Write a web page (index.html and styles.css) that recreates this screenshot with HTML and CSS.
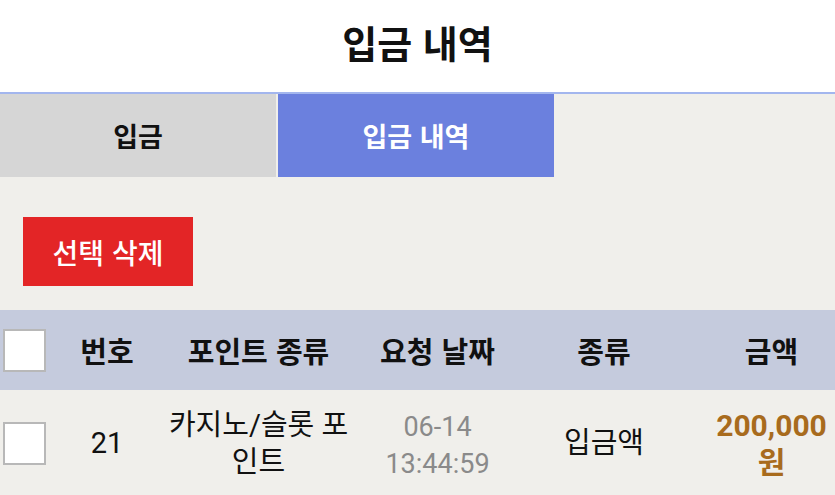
FILE: index.html
```html
<!DOCTYPE html>
<html lang="ko">
<head>
  <meta charset="UTF-8">
  <meta name="viewport" content="width=device-width, initial-scale=1.0">
  <title>입금 내역</title>
  <link rel="stylesheet" href="styles.css">
</head>
<body>
  <!-- Page Title -->
  <div class="page-header">입금 내역</div>

  <!-- Tabs -->
  <div class="tabs">
    <a href="#" class="tab">입금</a>
    <a href="#" class="tab active">입금 내역</a>
  </div>

  <!-- Main Content -->
  <div class="content">
    <div class="actions">
      <button class="delete-btn">선택 삭제</button>
    </div>

    <table class="history">
      <colgroup>
        <col class="col-check">
        <col class="col-no">
        <col class="col-point">
        <col class="col-date">
        <col class="col-type">
        <col class="col-amount">
      </colgroup>
      <thead>
        <tr>
          <th><input type="checkbox" class="check"></th>
          <th>번호</th>
          <th>포인트 종류</th>
          <th>요청 날짜</th>
          <th>종류</th>
          <th class="amount-head">금액</th>
        </tr>
      </thead>
      <tbody>
        <tr>
          <td><input type="checkbox" class="check"></td>
          <td>21</td>
          <td class="point">카지노/슬롯 포인트</td>
          <td class="date">06-14<br>13:44:59</td>
          <td>입금액</td>
          <td class="amount">200,000 원</td>
        </tr>
      </tbody>
    </table>
  </div>
</body>
</html>
```

FILE: styles.css
```css
/* Global Styles */
body {
  font-family: Roboto, "Noto Sans CJK KR", sans-serif;
  margin: 0;
  padding: 0;
  background-color: #f0efeb;
  color: #111;
}

/* Title */
.page-header {
  background-color: #ffffff;
  height: 92px;
  line-height: 84px;
  text-align: center;
  font-family: "Noto Sans CJK KR", sans-serif;
  font-size: 38px;
  font-weight: bold;
  border-bottom: 2px solid #a3b6ee;
}

/* Tabs */
.tabs {
  display: flex;
  height: 83px;
}

.tab {
  width: 276px;
  display: flex;
  justify-content: center;
  align-items: center;
  text-decoration: none;
  color: #111;
  background-color: #d6d6d6;
  font-family: "Noto Sans CJK KR", sans-serif;
  font-size: 27px;
  font-weight: bold;
}

.tab.active {
  margin-left: 2px;
  background-color: #6b80de;
  color: #ffffff;
}

/* Delete Button */
.actions {
  padding: 40px 23px 24px;
}

.delete-btn {
  width: 170px;
  height: 69px;
  border: none;
  background-color: #e32526;
  color: #ffffff;
  font-family: "Noto Sans CJK KR", sans-serif;
  font-size: 28px;
  font-weight: 500;
  cursor: pointer;
}

/* Table */
.history {
  width: 100%;
  table-layout: fixed;
  border-collapse: collapse;
}

.col-check { width: 52px; }
.col-no { width: 110px; }
.col-point { width: 193px; }
.col-date { width: 165px; }
.col-type { width: 168px; }
.col-amount { width: 147px; }

.history th,
.history td {
  padding: 0 6px;
  text-align: center;
}

.history th:first-child,
.history td:first-child {
  padding: 0 0 0 3px;
  text-align: left;
}

.history th {
  height: 80px;
  background-color: #c5cbdd;
  font-family: "Noto Sans CJK KR", sans-serif;
  font-size: 29px;
  font-weight: bold;
}

.history td {
  height: 103px;
  font-size: 29px;
  line-height: 37px;
}

.check {
  appearance: none;
  display: block;
  margin: 0;
  width: 43px;
  height: 43px;
  background-color: #ffffff;
  border: 2px solid #b8b8b8;
  box-sizing: border-box;
}

.history td.point {
  padding: 0 4px;
}

.history td.date {
  color: #8a8a8a;
  font-size: 27px;
  padding-top: 4px;
}

.history th.amount-head,
.history td.amount {
  padding: 0 0 0 20px;
}

.history td.amount {
  color: #a86b1d;
  font-weight: bold;
  font-size: 30px;
}
```
